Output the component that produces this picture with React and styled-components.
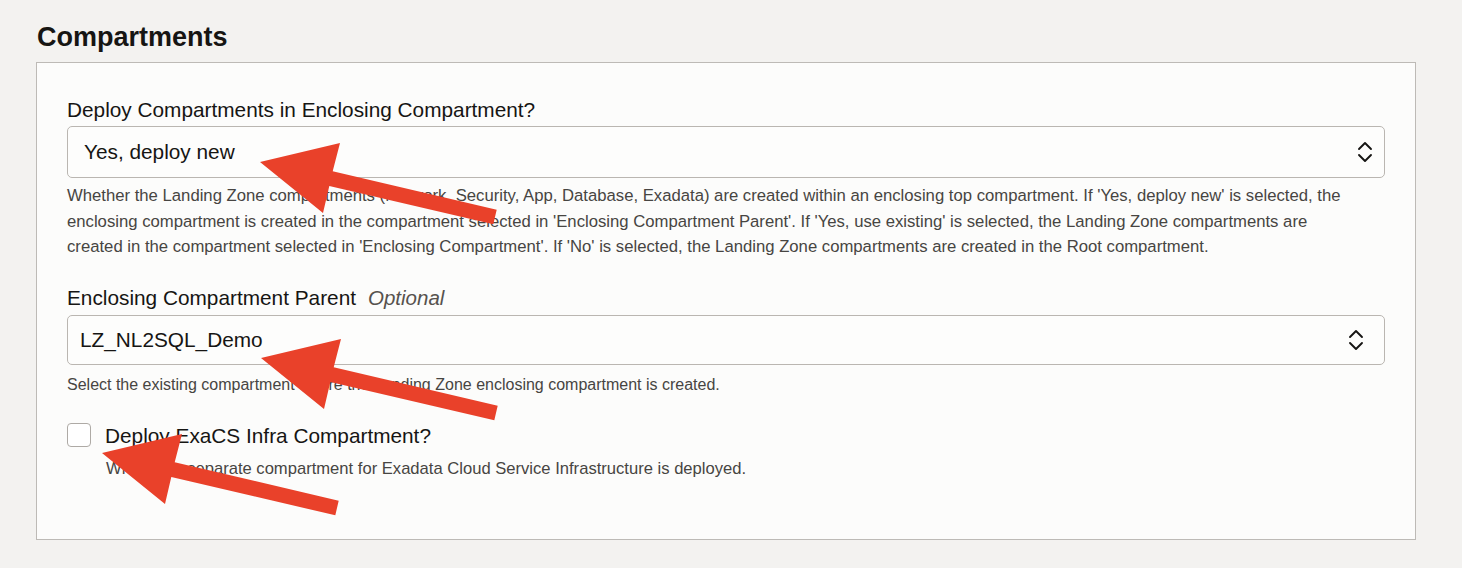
import React from 'react';
import styled, { createGlobalStyle } from 'styled-components';

const GlobalStyle = createGlobalStyle`
  html, body {
    margin: 0;
    padding: 0;
    background: #f3f2f0;
  }
  body {
    font-family: "Liberation Sans", Arial, sans-serif;
    color: #161513;
  }
`;

const Page = styled.div`
  position: relative;
  width: 1462px;
  height: 568px;
  box-sizing: border-box;
  padding: 21px 46px 0 36px;
  overflow: hidden;
`;

const Title = styled.h2`
  margin: 0 0 9px 1px;
  font-size: 27px;
  line-height: 32px;
  font-weight: 700;
  color: #161513;
`;

const Panel = styled.div`
  box-sizing: border-box;
  height: 478px;
  border: 1px solid #bdbab6;
  background: #fcfcfb;
  padding: 35px 30px 0;
  display: flex;
  flex-direction: column;
`;

const Field = styled.div`
  display: flex;
  flex-direction: column;
  margin-top: ${({ $gap }) => $gap || 0}px;
`;

const Label = styled.label`
  font-size: 20.8px;
  line-height: 24px;
  color: #161513;
  display: flex;
  align-items: baseline;
  gap: 12px;
`;

const OptionalTag = styled.span`
  font-style: italic;
  font-size: 20.5px;
  color: #56524e;
`;

const SelectBox = styled.div`
  box-sizing: border-box;
  margin-top: ${({ $top }) => $top}px;
  height: ${({ $h }) => $h}px;
  border: 1px solid #bab6b1;
  border-radius: 5px;
  background: #fdfdfc;
  display: flex;
  align-items: center;
  justify-content: space-between;
  padding: ${({ $pad }) => $pad};
  font-size: 20.8px;
  color: #161513;
`;

const Help = styled.p`
  margin: ${({ $top }) => $top}px 0 0;
  max-width: ${({ $max }) => $max || 1290}px;
  font-size: ${({ $size }) => $size || 16}px;
  line-height: 25.5px;
  color: #474542;
`;

const CheckRow = styled.div`
  display: flex;
  align-items: center;
  gap: 14px;
  margin-top: 25px;
`;

const CheckBox = styled.span`
  box-sizing: border-box;
  width: 24px;
  height: 24px;
  border: 1px solid #aeaaa5;
  border-radius: 4px;
  background: #ffffff;
  flex: none;
`;

const CheckText = styled.div`
  font-size: 20.8px;
  line-height: 24px;
  padding-top: 2px;
`;

const Indent = styled.div`
  padding-left: 39px;
`;

const ArrowSvg = styled.svg`
  position: absolute;
  pointer-events: none;
`;

function Chevrons() {
  return (
    <svg width="16" height="22" viewBox="0 0 16 22" fill="none">
      <path d="M2 8 L8 2 L14 8" stroke="#161513" strokeWidth="1.9" strokeLinecap="round" strokeLinejoin="round" />
      <path d="M2 14 L8 20 L14 14" stroke="#161513" strokeWidth="1.9" strokeLinecap="round" strokeLinejoin="round" />
    </svg>
  );
}

function Arrow({ x, y }) {
  // tip of the arrow sits at (x, y)
  return (
    <ArrowSvg width="250" height="90" viewBox="0 0 250 90" style={{ left: x - 2, top: y - 22 }}>
      <polygon
        points="2,22 82,3 74.7,31.3 238.7,69.7 235.3,84.3 71.3,45.9 65,73"
        fill="#e9412a"
      />
    </ArrowSvg>
  );
}

export default function App() {
  return (
    <Page>
      <GlobalStyle />
      <Title>Compartments</Title>
      <Panel>
        <Field>
          <Label>Deploy Compartments in Enclosing Compartment?</Label>
          <SelectBox $top={4} $h={52} $pad="0 11px 0 16px">
            <span>Yes, deploy new</span>
            <Chevrons />
          </SelectBox>
          <Help $top={5} $size={16.7} $max={1295}>
            Whether the Landing Zone compartments (Network, Security, App, Database, Exadata) are created within an
            enclosing top compartment. If 'Yes, deploy new' is selected, the enclosing compartment is created in the
            compartment selected in 'Enclosing Compartment Parent'. If 'Yes, use existing' is selected, the Landing
            Zone compartments are created in the compartment selected in 'Enclosing Compartment'. If 'No' is selected,
            the Landing Zone compartments are created in the Root compartment.
          </Help>
        </Field>
        <Field $gap={26}>
          <Label>
            Enclosing Compartment Parent <OptionalTag>Optional</OptionalTag>
          </Label>
          <SelectBox $top={5} $h={50} $pad="0 20px 0 12px">
            <span>LZ_NL2SQL_Demo</span>
            <Chevrons />
          </SelectBox>
          <Help $top={7}>
            Select the existing compartment where the Landing Zone enclosing compartment is created.
          </Help>
        </Field>
        <CheckRow>
          <CheckBox />
          <CheckText>Deploy ExaCS Infra Compartment?</CheckText>
        </CheckRow>
        <Indent>
          <Help $top={8} $size={16.6}>
            Whether a separate compartment for Exadata Cloud Service Infrastructure is deployed.
          </Help>
        </Indent>
      </Panel>
      <Arrow x={260} y={162} />
      <Arrow x={261} y={358} />
      <Arrow x={102} y={453} />
    </Page>
  );
}
